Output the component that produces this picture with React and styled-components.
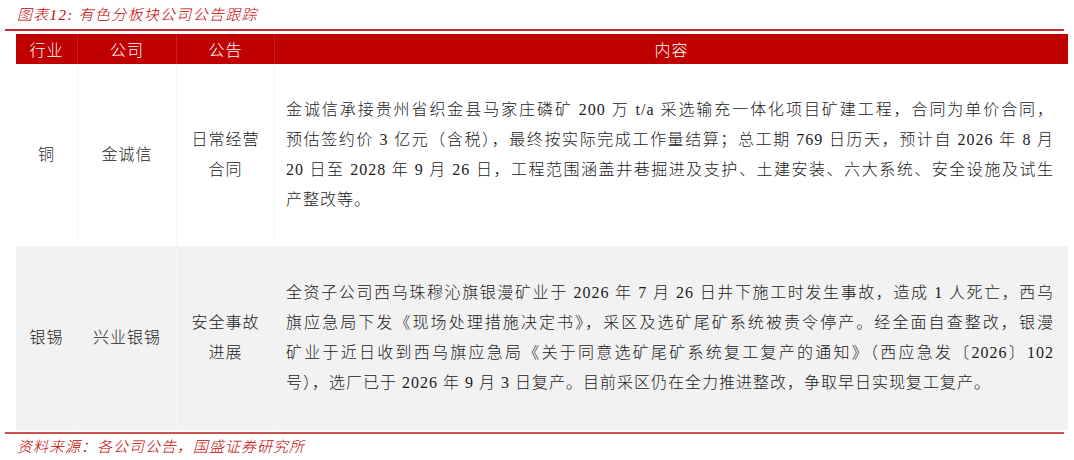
import React from "react";
import styled, { createGlobalStyle } from "styled-components";

const GlobalStyle = createGlobalStyle`
  html, body {
    margin: 0;
    padding: 0;
    background: #ffffff;
  }
  body {
    font-family: "Liberation Serif", "Noto Sans CJK SC", serif;
  }
`;

const Page = styled.div`
  width: 1074px;
  height: 460px;
  overflow: hidden;
  background: #fff;
`;

const Caption = styled.div`
  margin-left: 5px;
  width: 1059px;
  height: 31px;
  box-sizing: border-box;
  padding: 5px 0 0 12px;
  border-bottom: 2px solid #c8282d;
  color: #c00000;
  font-family: "Liberation Serif", "Noto Sans CJK SC", serif;
  font-style: italic;
  font-size: 15px;
  line-height: 20px;
  letter-spacing: 1.3px;
  font-weight: 300;
`;

const Table = styled.div`
  margin: 3px 0 0 16px;
  width: 1052px;
  display: grid;
  grid-template-columns: 61px 99px 98px 1fr;
  font-family: "Liberation Serif", "Noto Sans CJK SC", serif;
  font-size: 16px;
  color: #1a1a1a;
`;

const HeadCell = styled.div`
  height: 30px;
  background: #c00000;
  color: #fff;
  display: flex;
  align-items: center;
  justify-content: center;
  letter-spacing: 1px;
  font-weight: 300;
  border-left: ${(p) => (p.$first ? "none" : "1px solid rgba(255,255,255,0.12)")};
`;

const Cell = styled.div`
  min-height: ${(p) => p.$h}px;
  box-sizing: border-box;
  background: ${(p) => (p.$shade ? "#f2f2f2" : "#ffffff")};
  border-left: ${(p) =>
    p.$first ? "none" : p.$shade ? "1px solid #f8f8f8" : "1px solid #f6f6f6"};
  display: flex;
  align-items: center;
  justify-content: center;
  text-align: center;
  line-height: 30px;
  letter-spacing: 1px;
  font-weight: 300;
`;

const TextCell = styled(Cell)`
  justify-content: flex-start;
  text-align: left;
  padding: 0 14px 0 11px;
`;

const Lines = styled.div`
  width: 100%;
`;

const Line = styled.div`
  text-align: ${(p) => (p.$last ? "left" : "justify")};
  text-align-last: ${(p) => (p.$last ? "left" : "justify")};
  white-space: nowrap;
`;

const Rule = styled.div`
  margin: 2px 0 0 5px;
  width: 1059px;
  height: 2px;
  background: #d0504f;
`;

const Source = styled.div`
  padding: 3px 0 0 17px;
  color: #c00000;
  font-style: italic;
  font-size: 15px;
  line-height: 20px;
  letter-spacing: 1px;
  font-weight: 300;
`;

const rows = [
  {
    industry: "铜",
    company: "金诚信",
    notice: ["日常经营", "合同"],
    h: 182,
    lines: [
      "金诚信承接贵州省织金县马家庄磷矿 200 万 t/a 采选输充一体化项目矿建工程，合同为单价合同，",
      "预估签约价 3 亿元（含税），最终按实际完成工作量结算；总工期 769 日历天，预计自 2026 年 8 月",
      "20 日至 2028 年 9 月 26 日，工程范围涵盖井巷掘进及支护、土建安装、六大系统、安全设施及试生",
      "产整改等。",
    ],
  },
  {
    industry: "银锡",
    company: "兴业银锡",
    notice: ["安全事故", "进展"],
    h: 184,
    shade: true,
    lines: [
      "全资子公司西乌珠穆沁旗银漫矿业于 2026 年 7 月 26 日井下施工时发生事故，造成 1 人死亡，西乌",
      "旗应急局下发《现场处理措施决定书》，采区及选矿尾矿系统被责令停产。经全面自查整改，银漫",
      "矿业于近日收到西乌旗应急局《关于同意选矿尾矿系统复工复产的通知》（西应急发〔2026〕102",
      "号），选厂已于 2026 年 9 月 3 日复产。目前采区仍在全力推进整改，争取早日实现复工复产。",
    ],
  },
];

export default function App() {
  return (
    <Page>
      <GlobalStyle />
      <Caption>图表12: 有色分板块公司公告跟踪</Caption>
      <Table>
        <HeadCell $first>行业</HeadCell>
        <HeadCell>公司</HeadCell>
        <HeadCell>公告</HeadCell>
        <HeadCell>内容</HeadCell>
        {rows.map((r) => (
          <React.Fragment key={r.company}>
            <Cell $first $h={r.h} $shade={r.shade}>
              {r.industry}
            </Cell>
            <Cell $h={r.h} $shade={r.shade}>
              {r.company}
            </Cell>
            <Cell $h={r.h} $shade={r.shade}>
              <div>
                {r.notice.map((n) => (
                  <div key={n}>{n}</div>
                ))}
              </div>
            </Cell>
            <TextCell $h={r.h} $shade={r.shade}>
              <Lines>
                {r.lines.map((l, i) => (
                  <Line key={i} $last={i === r.lines.length - 1}>
                    {l}
                  </Line>
                ))}
              </Lines>
            </TextCell>
          </React.Fragment>
        ))}
      </Table>
      <Rule />
      <Source>资料来源：各公司公告，国盛证券研究所</Source>
    </Page>
  );
}
